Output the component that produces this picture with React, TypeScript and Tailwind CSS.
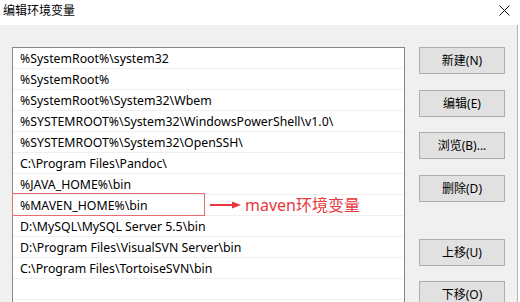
import React from "react";

const rows = [
  "%SystemRoot%\\system32",
  "%SystemRoot%",
  "%SystemRoot%\\System32\\Wbem",
  "%SYSTEMROOT%\\System32\\WindowsPowerShell\\v1.0\\",
  "%SYSTEMROOT%\\System32\\OpenSSH\\",
  "C:\\Program Files\\Pandoc\\",
  "%JAVA_HOME%\\bin",
  "%MAVEN_HOME%\\bin",
  "D:\\MySQL\\MySQL Server 5.5\\bin",
  "D:\\Program Files\\VisualSVN Server\\bin",
  "C:\\Program Files\\TortoiseSVN\\bin",
  "",
];

const font = { fontFamily: "'Noto Sans', 'Noto Sans CJK SC', sans-serif" };

function Btn({ label, cls }: { label: string; cls: string }) {
  return (
    <div
      className={`h-[27px] w-[86px] shrink-0 border border-[#adadad] bg-[#e1e1e1] flex items-center justify-center text-[12px] text-black ${cls}`}
    >
      {label}
    </div>
  );
}

export default function App() {
  return (
    <div className="w-[520px] h-[302px] overflow-hidden bg-white flex flex-col" style={font}>
      <div className="h-[25px] shrink-0 bg-white flex items-start justify-between pl-[3px] pr-[10px] pt-[4px]">
        <span className="text-[12px] text-black leading-[13px]">编辑环境变量</span>
        <svg width="11" height="11" viewBox="0 0 11 11" className="mt-[1px]">
          <path d="M0.5 0.5 L10.5 10.5 M10.5 0.5 L0.5 10.5" stroke="#111" strokeWidth="1" fill="none" />
        </svg>
      </div>
      <div className="flex-1 w-[518px] bg-[#f0f0f0] border-r border-[#b5b5b5] flex pt-[22px]">
        <div className="ml-[12px] w-[393px] h-[300px] bg-white border border-[#828790] flex flex-col shrink-0">
          {rows.map((r, i) => (
            <div
              key={i}
              className="relative h-[21px] shrink-0 border-b border-[#f0f0f0] flex items-center pl-[7px] pt-[2px] text-[12.3px] text-black whitespace-nowrap"
            >
              {r}
              {i === 7 && (
                <>
                  <div className="absolute left-[-1px] top-[-2px] w-[193px] h-[23px] border border-[#e36f6f]" />
                  <div className="absolute left-[197px] top-[-1px] h-[21px] flex items-center">
                    <svg width="32" height="10" viewBox="0 0 32 10">
                      <path d="M0 5 L24 5" stroke="#e8383d" strokeWidth="2" />
                      <path d="M22 1.5 L31 5 L22 8.5 Z" fill="#e8383d" />
                    </svg>
                    <span className="ml-[3px] text-[16px] text-[#e8383d] leading-none">maven环境变量</span>
                  </div>
                </>
              )}
            </div>
          ))}
        </div>
        <div className="ml-[14px] flex flex-col">
          <Btn label="新建(N)" cls="" />
          <Btn label="编辑(E)" cls="mt-[16px]" />
          <Btn label="浏览(B)..." cls="mt-[15px]" />
          <Btn label="删除(D)" cls="mt-[16px]" />
          <Btn label="上移(U)" cls="mt-[37px]" />
          <Btn label="下移(O)" cls="mt-[15px]" />
        </div>
      </div>
    </div>
  );
}
